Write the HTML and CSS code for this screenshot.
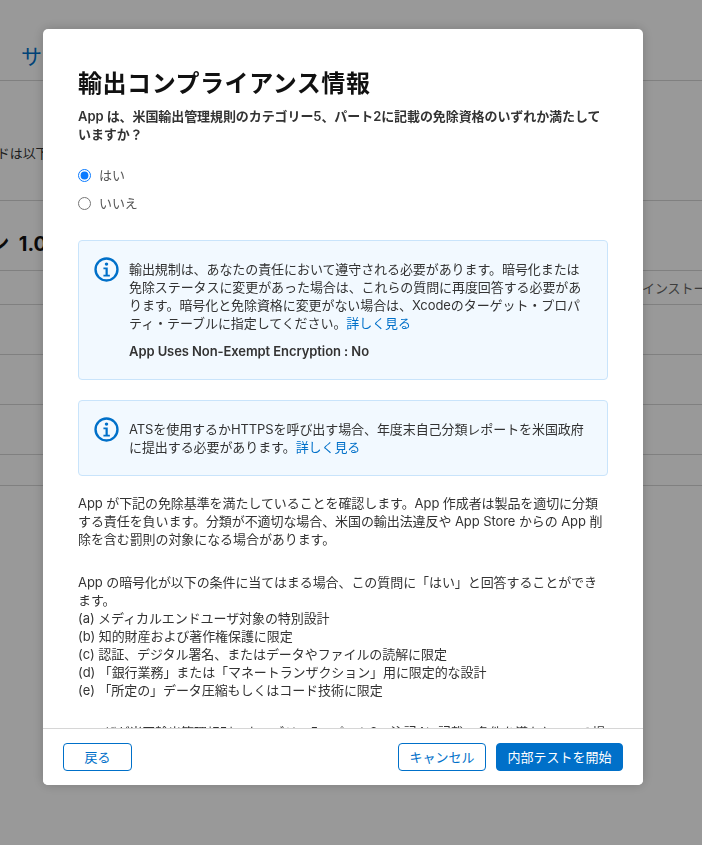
FILE: index.html
```html
<!DOCTYPE html>
<html lang="ja">
<head>
<meta charset="utf-8">
<title>輸出コンプライアンス情報</title>
<link rel="stylesheet" href="styles.css">
</head>
<body>
<div class="page">
  <div class="bg-row bg-nav"><a class="bg-link">サービス</a></div>
  <div class="bg-row bg-desc"><span class="bg-desc-text">ビルドは以下</span></div>
  <div class="bg-row bg-version"><span class="bg-h">バージョン 1.0</span></div>
  <div class="bg-row bg-th"><span class="bg-install">インストール</span></div>
  <div class="bg-row bg-r50"></div>
  <div class="bg-row bg-r50"></div>
  <div class="bg-row bg-r50"></div>
  <div class="bg-row bg-r31"></div>
</div>
<div class="overlay"></div>
<div class="modal" role="dialog">
  <div class="modal-body">
    <h1 class="title">輸出コンプライアンス情報</h1>
    <p class="question">App は、米国輸出管理規則のカテゴリー5、パート2に記載の免除資格のいずれか満たしていますか？</p>
    <div class="radios">
      <label class="radio"><input type="radio" name="a" checked><span>はい</span></label>
      <label class="radio"><input type="radio" name="a"><span>いいえ</span></label>
    </div>
    <div class="notice notice-a">
      <svg class="info" viewBox="0 0 26 26" width="25" height="25"><circle cx="13" cy="13" r="11.4" fill="none" stroke="#0070c9" stroke-width="2.5"/><circle cx="13" cy="7.4" r="1.8" fill="#0070c9"/><path d="M9.8 11h4.5v7.5h2.2v1.8h-6.7v-1.8h2.2v-5.7h-2.2z" fill="#0070c9"/></svg>
      <div class="notice-text">
        <p>輸出規制は、あなたの責任において遵守される必要があります。暗号化または免除ステータスに変更があった場合は、これらの質問に再度回答する必要があります。暗号化と免除資格に変更がない場合は、Xcodeのターゲット・プロパティ・テーブルに指定してください。<a class="link">詳しく見る</a></p>
        <p class="plist">App Uses Non-Exempt Encryption : No</p>
      </div>
    </div>
    <div class="notice notice-b">
      <svg class="info" viewBox="0 0 26 26" width="25" height="25"><circle cx="13" cy="13" r="11.4" fill="none" stroke="#0070c9" stroke-width="2.5"/><circle cx="13" cy="7.4" r="1.8" fill="#0070c9"/><path d="M9.8 11h4.5v7.5h2.2v1.8h-6.7v-1.8h2.2v-5.7h-2.2z" fill="#0070c9"/></svg>
      <div class="notice-text">
        <p>ATSを使用するかHTTPSを呼び出す場合、年度末自己分類レポートを米国政府に提出する必要があります。<a class="link">詳しく見る</a></p>
      </div>
    </div>
    <p class="para para-first">App が下記の免除基準を満たしていることを確認します。App 作成者は製品を適切に分類する責任を負います。分類が不適切な場合、米国の輸出法違反や App Store からの App 削除を含む罰則の対象になる場合があります。</p>
    <p class="para para-second">App の暗号化が以下の条件に当てはまる場合、この質問に「はい」と回答することができます。<br>(a) メディカルエンドユーザ対象の特別設計<br>(b) 知的財産および著作権保護に限定<br>(c) 認証、デジタル署名、またはデータやファイルの読解に限定<br>(d) 「銀行業務」または「マネートランザクション」用に限定的な設計<br>(e) 「所定の」データ圧縮もしくはコード技術に限定</p>
    <p class="para para-third">ユーザが米国輸出管理規則のカテゴリー5、パート2の注記4に記載の条件を満たしている場合</p>
  </div>
  <div class="modal-footer">
    <button class="btn btn-back">戻る</button>
    <div class="footer-right">
      <button class="btn btn-cancel">キャンセル</button>
      <button class="btn btn-primary">内部テストを開始</button>
    </div>
  </div>
</div>
</body>
</html>
```
FILE: styles.css
```css
* { box-sizing: border-box; }
html, body { margin: 0; height: 100%; }
body {
  background: #fff;
  color: #333;
  font-family: "Inter", "Noto Sans CJK JP", sans-serif;
  font-size: 13px;
  line-height: 18px;
  letter-spacing: -0.08px;
  text-spacing-trim: space-all;
  overflow: hidden;
}
p { margin: 0; }

/* Page behind the dialog */
.page { height: 845px; overflow: hidden; }
.bg-row { border-bottom: 1px solid #d6d6d6; white-space: nowrap; display: flex; align-items: center; }
.bg-nav { height: 81px; padding: 34px 0 0 21px; }
.bg-link { color: #0070c9; font-size: 21px; }
.bg-desc { height: 120px; padding: 46px 0 0 0; align-items: flex-start; }
.bg-desc-text { margin-left: -29px; padding-top: 17px; color: #333; }
.bg-version { height: 70px; }
.bg-h { margin-left: -90px; font-size: 20px; font-weight: 700; color: #111; padding-top: 16px; word-spacing: 5px; }
.bg-th { height: 34px; justify-content: flex-start; }
.bg-install { margin-left: 642px; color: #666; font-size: 13px; }
.bg-r50 { height: 50px; }
.bg-r31 { height: 31px; }

.overlay { position: fixed; inset: 0; background: rgba(0, 0, 0, .4); }

/* Dialog */
.modal {
  position: fixed;
  left: 43px;
  top: 29px;
  width: 600px;
  height: 756px;
  background: #fff;
  border-radius: 5px;
  box-shadow: 0 0 12px rgba(0, 0, 0, .2);
  display: flex;
  flex-direction: column;
  overflow: hidden;
}
.modal-body {
  flex: 1;
  min-height: 0;
  overflow: hidden;
  padding: 40px 35px 0;
}
.title { margin: 0 0 8px; font-size: 24px; line-height: 30px; font-weight: 700; color: #111; letter-spacing: .55px; }
.question { font-size: 13px; line-height: 18px; font-weight: 600; color: #333; }
.radios { margin-top: 23px; display: flex; flex-direction: column; gap: 10px; }
.radio { display: flex; align-items: center; height: 18px; color: #555; }
.radio input { margin: 0 8px 0 0; width: 13px; height: 13px; accent-color: #0a7aff; }

.notice {
  display: flex;
  gap: 10px;
  background: #f2f9ff;
  border: 1px solid #c9e4fb;
  border-radius: 4px;
  padding: 16px 15px 0;
  color: #333;
}
.notice-a { margin-top: 28px; height: 140px; }
.notice-b { margin-top: 20px; height: 76px; }
.info { flex: none; }
.notice-text { flex: 1; padding-top: 3px; }
.plist { margin-top: 10px; font-weight: 600; }
.link { color: #0070c9; }

.para { color: #333; }
.para-first { margin-top: 18px; }
.para-second { margin-top: 25px; }
.para-third { margin-top: 24px; }

.modal-footer {
  flex: none;
  height: 57px;
  border-top: 1px solid #d6d6d6;
  display: flex;
  justify-content: space-between;
  align-items: flex-start;
  padding: 14px 20px 0;
  background: #fff;
}
.footer-right { display: flex; gap: 10px; }
.btn {
  height: 28px;
  border: 1px solid #0070c9;
  border-radius: 4px;
  background: #fff;
  color: #0070c9;
  font: inherit;
  padding: 0;
}
.btn-back { width: 69px; }
.btn-cancel { width: 88px; }
.btn-primary { width: 127px; background: #0070c9; color: #fff; }
```
